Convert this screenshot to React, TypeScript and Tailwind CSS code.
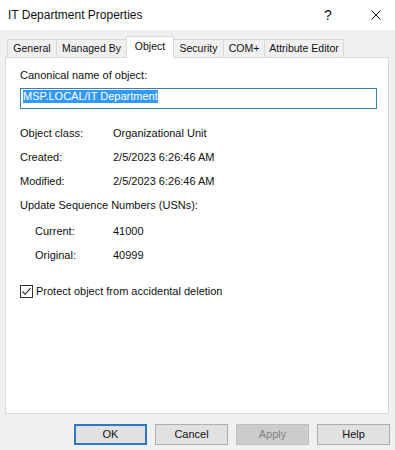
import { useState } from 'react';

const tabs = [
  { label: 'General', w: 'w-[50px]' },
  { label: 'Managed By', w: 'w-[71px]' },
  { label: 'Object', w: 'w-[48px]' },
  { label: 'Security', w: 'w-[51px]' },
  { label: 'COM+', w: 'w-[42px]' },
  { label: 'Attribute Editor', w: 'w-[80px]' },
];

const InfoRow = ({ label, value, indent }: { label: string; value: string; indent?: boolean }) => (
  <div className="flex items-center h-6">
    <span className={indent ? 'w-[93px] pl-[15px]' : 'w-[93px]'}>{label}</span>
    <span>{value}</span>
  </div>
);

const App = () => {
  const [active] = useState('Object');
  const [protect, setProtect] = useState(true);

  return (
    <div className="w-[395px] h-[450px] bg-[#f0f0f0] text-[11px] leading-[13px] text-[#111] font-['Liberation_Sans',Arial,sans-serif] select-none">
      {/* title bar */}
      <div className="h-[30px] bg-white flex items-center pl-[8px]">
        <span className="text-[12px]">IT Department Properties</span>
        <span className="ml-auto w-[12px] text-center text-[14px] font-light">?</span>
        <svg className="ml-[37px] mr-[14px]" width="10" height="10" viewBox="0 0 10 10">
          <path d="M0.5 0.5 L9.5 9.5 M9.5 0.5 L0.5 9.5" stroke="#111" strokeWidth="1" />
        </svg>
      </div>

      {/* tabs */}
      <div className="flex items-end h-[21px] mt-[6px] ml-[7px] text-[10.5px]">
        {tabs.map((t, i) => {
          const on = t.label === active;
          return (
            <div
              key={t.label}
              className={[
                t.w,
                i > 0 ? '-ml-px' : '',
                'flex justify-center border-t border-l border-r border-[#d9d9d9] whitespace-nowrap',
                on ? 'h-[22px] -mb-px bg-white relative z-10 pt-[3px] items-start' : 'h-[18px] bg-[#f0f0f0] items-center',
              ].join(' ')}
            >
              {t.label}
            </div>
          );
        })}
      </div>

      {/* panel */}
      <div className="ml-[5px] w-[384px] h-[357px] bg-white border border-[#d9d9d9] pl-[14px] pt-[11px]">
        <div>Canonical name of object:</div>
        <div className="mt-[6px] w-[357px] h-[21px] border border-[#3c7fb1] pl-[2px] pt-px">
          <span className="bg-[#3399ff] text-white inline-block">MSP.LOCAL/IT Department</span>
        </div>

        <div className="mt-[12px]">
          <InfoRow label="Object class:" value="Organizational Unit" />
          <InfoRow label="Created:" value="2/5/2023 6:26:46 AM" />
          <InfoRow label="Modified:" value="2/5/2023 6:26:46 AM" />
          <div className="flex items-center h-6">Update Sequence Numbers (USNs):</div>
          <div className="mt-[2px]">
            <InfoRow label="Current:" value="41000" indent />
            <InfoRow label="Original:" value="40999" indent />
          </div>
        </div>

        <label className="mt-[18px] flex items-center gap-[3px]" onClick={() => setProtect((v) => !v)}>
          <span className="w-[13px] h-[13px] border border-[#333] bg-white flex items-center justify-center">
            {protect && (
              <svg width="11" height="11" viewBox="0 0 11 11">
                <path d="M1.5 5.5 L4.2 8.3 L9.5 2.2" fill="none" stroke="#222" strokeWidth="1.1" />
              </svg>
            )}
          </span>
          <span>Protect object from accidental deletion</span>
        </label>
      </div>

      {/* buttons */}
      <div className="flex justify-end gap-2 pr-[5px] mt-[10px]">
        <button className="w-[73px] h-[21px] bg-[#e1e1e1] border-2 border-[#2f78c0]">OK</button>
        <button className="w-[73px] h-[21px] bg-[#e1e1e1] border border-[#adadad]">Cancel</button>
        <button className="w-[73px] h-[21px] bg-[#cccccc] border border-[#bfbfbf] text-[#838383]">Apply</button>
        <button className="w-[73px] h-[21px] bg-[#e1e1e1] border border-[#adadad]">Help</button>
      </div>
    </div>
  );
};

export default App;
